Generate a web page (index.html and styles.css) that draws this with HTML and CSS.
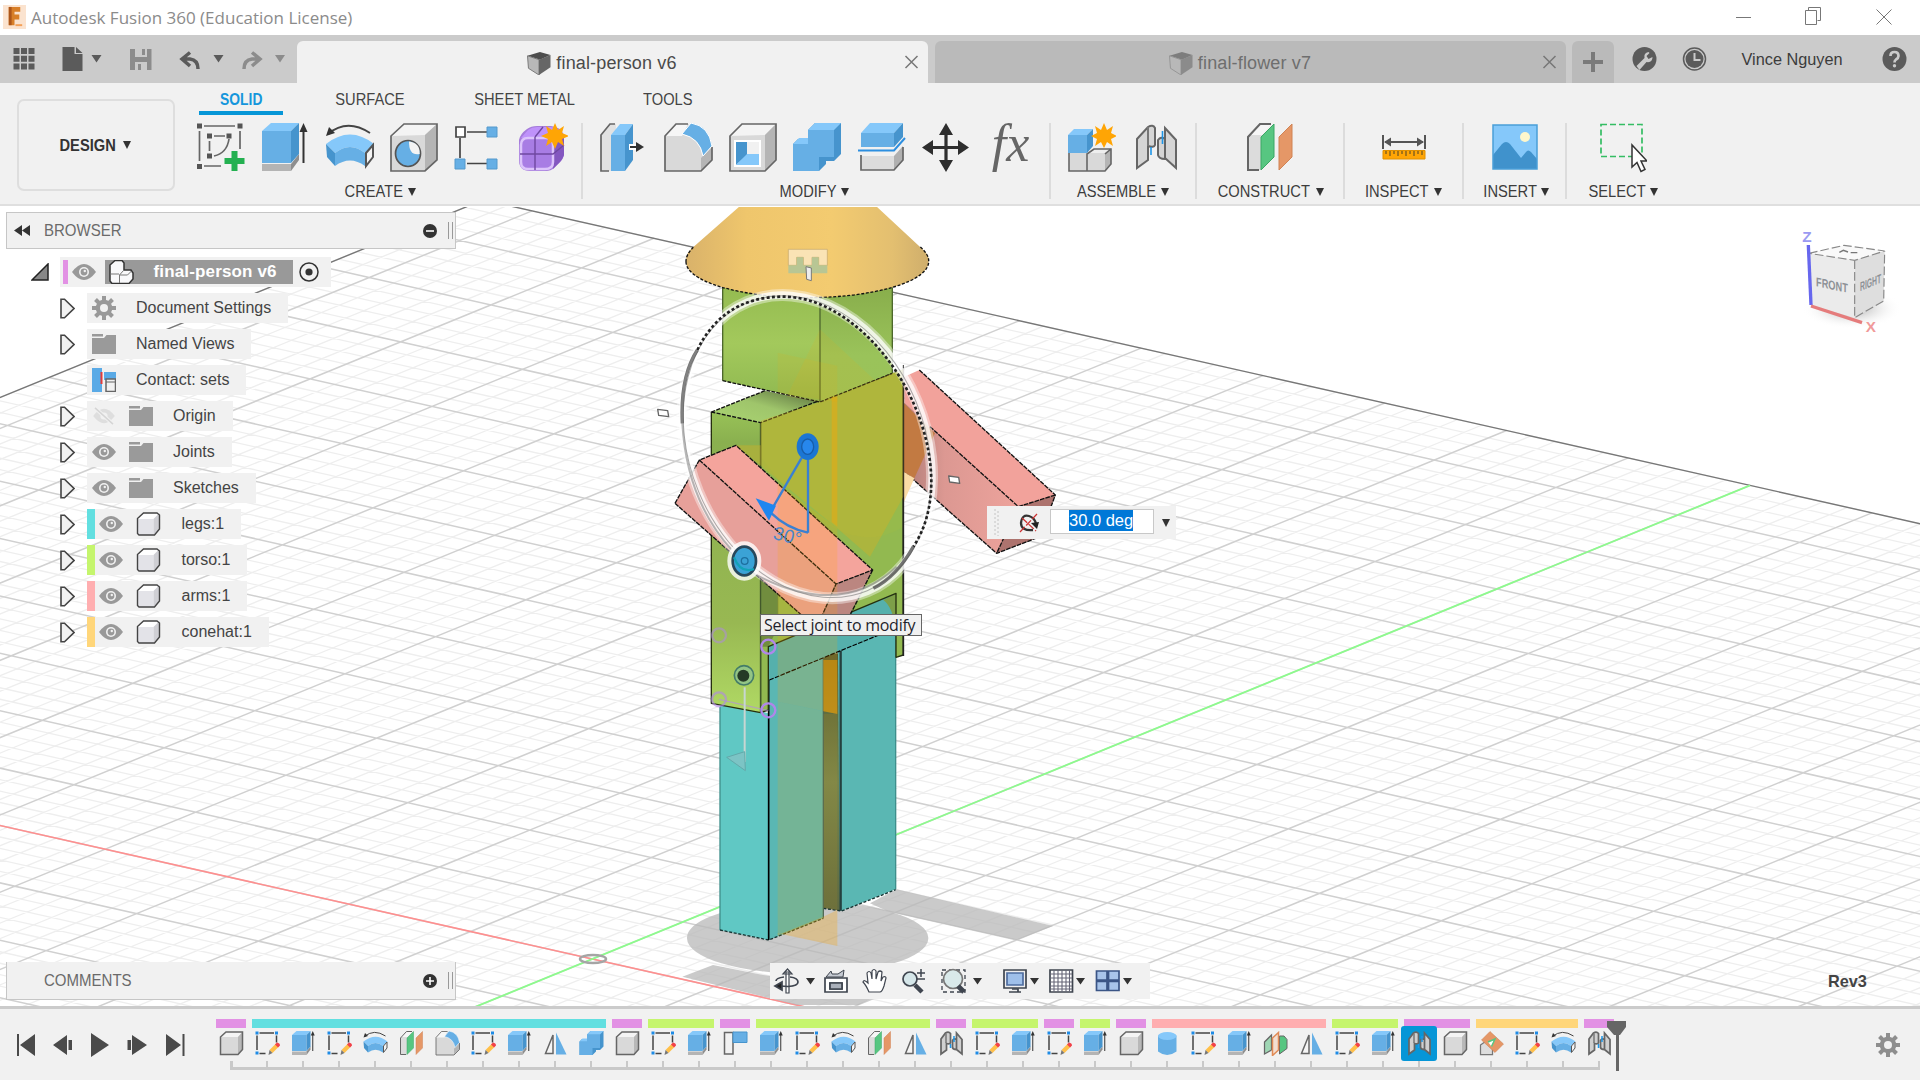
FILE: index.html
```html
<!DOCTYPE html>
<html lang="en">
<head>
<meta charset="utf-8">
<title>Autodesk Fusion 360 (Education License)</title>
<link rel="stylesheet" href="styles.css">
</head>
<body>
<svg class="sprite" aria-hidden="true">
  <symbol id="sketch-new" viewBox="0 0 50 50">
    <path d="M8 3h31M3.500 8v30M44 8v18M8 43h17M18 13h11M13.500 18v10M33 16q-2 14-15 17" fill="none" stroke="#666" stroke-width="1.700"/>
    <path d="M1 .5h5v5H1zM41.500 .5h5v5h-5zM1 41h5v5H1zM11 10.500h5v5h-5zM30.500 10.500h5v5h-5zM11 30.500h5v5h-5z" fill="#555"/>
    <path d="M35.500 28h6v7h7v6h-7v7h-6v-7h-7v-6h7z" fill="#23b050"/>
  </symbol>
  <symbol id="extrude" viewBox="0 0 50 50">
    <path d="M2 41h29v7H2z" fill="#b4b4b4"/><path d="M31 41l8-10v6l-8 11z" fill="#8e8e8e"/>
    <path d="M2 8h29v32H2z" fill="#66afe5"/><path d="M2 8l9-8h28l-8 8z" fill="#85c8fa"/><path d="M31 8l8-8v31l-8 9z" fill="#4694cd"/>
    <path d="M43.500 6v34" stroke="#333" stroke-width="2"/><path d="M43.500 0l4 9h-8z" fill="#333"/>
  </symbol>
  <symbol id="revolve" viewBox="0 0 50 50">
    <path d="M3 11Q22-5 45 10" fill="none" stroke="#444" stroke-width="2"/><path d="M1 13l3-9 6 6z" fill="#333"/>
    <path d="M1 21Q25 2 49 21l-9 9Q25 18 10 30z" fill="#85c8fa"/>
    <path d="M10 30Q25 18 40 30v13Q25 32 10 43z" fill="#66afe5"/><path d="M1 21l9 9v13l-8-9z" fill="#4694cd"/>
    <path d="M41 30l7-8v12l-7 9z" fill="#f4f4f4" stroke="#555" stroke-width="2"/>
  </symbol>
  <symbol id="hole" viewBox="0 0 50 50">
    <path d="M2 13L15 1h33v36L36 48H2z" fill="#d9d9d9"/><path d="M2 13L15 1h33L36 12z" fill="#f4f4f4"/><path d="M36 12L48 1v36L36 48z" fill="#b5b5b5"/>
    <path d="M2 13L15 1h33v36L36 48H2z" fill="none" stroke="#666" stroke-width="1.700"/>
    <ellipse cx="19" cy="30.500" rx="12.500" ry="13" fill="#66afe5" stroke="#555" stroke-width="1.700"/><path d="M20 18.500q11 1 10.700 12.500-11 2-10.700-12.500z" fill="#f4f4f4"/>
  </symbol>
  <symbol id="pattern" viewBox="0 0 50 50">
    <path d="M13 9h20M6 15v20M13 40.500h20" stroke="#444" stroke-width="1.700"/>
    <path d="M2 4h9v10H2z" fill="#fff" stroke="#444" stroke-width="1.700"/>
    <path d="M33 4h10v10H33zM1 36h10v10H1zM33 36h10v10H33z" fill="#66afe5" stroke="#5599cc"/>
  </symbol>
  <symbol id="form" viewBox="0 0 50 50">
    <path d="M1 17Q2 11 9 6q4-3 10-3h14q10 1 13 9v20q-1 5-6 9l-4 4q-3 3-8 3H12Q1 48 1 37z" fill="#a67ddb"/>
    <path d="M3 15l7-8q4-3 9-3h14q8 1 10 6l-8 5z" fill="#bf92fa"/>
    <path d="M36 17l10-6v21q-1 4-5 8l-6 6z" fill="#8457c0"/>
    <path d="M3 22q0-7 7-7h17q8 0 8 7v17q0 7-8 7H10q-7 0-7-7z" fill="#a87de4" stroke="#dcc4fb" stroke-width="2.500"/>
    <path d="M17 14v33M2 31h33l11-9M17 14l8-10" stroke="#6f48a0" stroke-width="1.400" fill="none"/>
    <path d="M37 0l3 7 6-4-2 7 7 3-7 3 2 7-6-4-3 7-3-7-6 4 2-7-7-3 7-3-2-7 6 4z" fill="#ffa505"/>
  </symbol>
  <symbol id="presspull" viewBox="0 0 50 50">
    <path d="M11 48H2V12L11 1h6v47z" fill="#e2e2e2"/><path d="M10 48H2V12L11 1h5" fill="none" stroke="#666" stroke-width="1.700"/>
    <path d="M12 12h14v36H12z" fill="#66afe5"/><path d="M12 12l9-11h13l-8 11z" fill="#85c8fa"/><path d="M26 12l8-11v36l-8 11z" fill="#4694cd"/>
    <path d="M30 24h8" stroke="#fff" stroke-width="6"/><path d="M31 24h8" stroke="#333" stroke-width="2"/><path d="M37 19l8 5-8 5z" fill="#333"/>
  </symbol>
  <symbol id="fillet" viewBox="0 0 50 50">
    <path d="M2 13L13 1h12q22 6 24 22v14L38 48H2z" fill="#d9d9d9"/><path d="M2 13L13 1h12l-6 12z" fill="#f6f6f6"/><path d="M38 35l11-11v13L38 48z" fill="#b5b5b5"/>
    <path d="M25 1H13L2 13v35h36l11-11V24" fill="none" stroke="#666" stroke-width="1.700"/>
    <path d="M19 11L28 0q18 3 21 23l-9 10q-3-18-21-22z" fill="#66afe5" stroke="#fff" stroke-width="1"/>
  </symbol>
  <symbol id="shell" viewBox="0 0 50 50">
    <path d="M2 13L14 1h34v36L37 48H2z" fill="#d9d9d9"/><path d="M2 13L14 1h34L37 12z" fill="#f4f4f4"/><path d="M37 12L48 1v36L37 48z" fill="#b5b5b5"/>
    <path d="M2 13L14 1h34v36L37 48H2z" fill="none" stroke="#666" stroke-width="1.700"/>
    <path d="M6 17h27v27H6z" fill="#fff"/><path d="M8 19h11v13L8 42z" fill="#4694cd"/><path d="M8 42l11-11h12v11z" fill="#85c8fa"/><path d="M19 19h12v12H19z" fill="#f1f1f1"/>
  </symbol>
  <symbol id="combine" viewBox="0 0 50 50">
    <path d="M1 21l5-5h10V7L23 0h26v31l-7 7H34v3l-7 7H1z" fill="#4694cd"/>
    <path d="M1 21h15V7h26v27H27v14H1z" fill="#66afe5"/><path d="M1 21l6-6h9v6zM16 7l7-7h26l-7 7z" fill="#85c8fa"/>
  </symbol>
  <symbol id="split" viewBox="0 0 50 50">
    <path d="M4 10h33v14H4z" fill="#66afe5"/><path d="M4 10l9-10h33l-9 10z" fill="#85c8fa"/><path d="M37 10l9-10v14l-9 10z" fill="#4694cd"/>
    <path d="M1 27.500h36L48 15" fill="none" stroke="#2d8fe0" stroke-width="2"/>
    <path d="M4 33h33v14H4z" fill="#dcdcdc"/><path d="M37 33l9-10v14l-9 10z" fill="#b0b0b0"/><path d="M4 32v15h33l9-10V24" fill="none" stroke="#666" stroke-width="1.700"/>
  </symbol>
  <symbol id="move" viewBox="0 0 50 50">
    <path d="M25 6v37M6 24.500h38" stroke="#2e2e2e" stroke-width="3.200"/><path d="M25 0l7 12H18zM25 49l7-12H18zM1 24.500L12 17v15zM48 24.500L37 17v15z" fill="#2e2e2e"/>
  </symbol>
  <symbol id="component" viewBox="0 0 50 50">
    <path d="M3 29h18v19H3zM21 31l6-6h17l-6 6z" fill="#eee"/><path d="M3 29h18v19H3zM21 30h18v18H21z" fill="#d9d9d9"/><path d="M39 30l6-5v16l-6 7z" fill="#b5b5b5"/>
    <path d="M3 29v19h36l6-7V26H28l-7 5v17M39 31l6-5" fill="none" stroke="#666" stroke-width="1.600"/>
    <path d="M2 12h19v18H2z" fill="#66afe5"/><path d="M2 12l6-6h19l-6 6z" fill="#85c8fa"/><path d="M21 12l6-6v17l-6 7z" fill="#4694cd"/>
    <path d="M38 0l3 7 6-4-2 7 6 3-6 3 2 7-6-4-3 6-3-6-6 4 2-7-6-3 6-3-2-7 6 4z" fill="#ffa505"/>
  </symbol>
  <symbol id="joint" viewBox="0 0 50 50">
    <path d="M6 16L17 4q5-3 7 1v17q-1 3-7 1v14L6 45z" fill="#d5d5d5" stroke="#666" stroke-width="2"/><path d="M17 4v19" stroke="#777" stroke-width="2"/>
    <path d="M27 17q3-4 7-1v20q-6 0-7-4zM34 5l11 12v28L34 35z" fill="#d5d5d5" stroke="#666" stroke-width="2"/>
    <path d="M31.500 8v13M20 24v8" stroke="#1e96e8" stroke-width="1.600"/>
  </symbol>
  <symbol id="joint-small" viewBox="0 0 50 50">
    <path d="M4 16L13 4q6-4 10 1v18q-1 4-8 2v13L4 46z" fill="#d0d0d0" stroke="#666" stroke-width="3.500"/><path d="M14 5v19" stroke="#777" stroke-width="3"/>
    <path d="M27 19q3-5 8-2v20q-7 0-8-4zM35 4l11 13v29L35 37z" fill="#d0d0d0" stroke="#666" stroke-width="3.500"/>
    <path d="M30 10v12M23 26v8" stroke="#1e96e8" stroke-width="3"/>
  </symbol>
  <symbol id="plane" viewBox="0 0 50 50">
    <path d="M3 12L15 1h12L17 12v35H3z" fill="#dcdcdc"/><path d="M3 12L15 1h12L17 12z" fill="#f6f6f6"/><path d="M14 47H3V14L15 1h11" fill="none" stroke="#666" stroke-width="2"/>
    <path d="M16 14L29 1v33L16 47z" fill="#57c681" stroke="#3ba765"/><path d="M34 14L47 1v33L34 47z" fill="#e59767" stroke="#d08355"/>
  </symbol>
  <symbol id="inspect" viewBox="0 0 50 50">
    <path d="M4 12v14M46 12v14M6 19h38" stroke="#555" stroke-width="2"/><path d="M5 19l7-4.500v9zM45 19l-7-4.500v9z" fill="#555"/>
    <path d="M4 27.500h42V36H4z" fill="#ffa505" stroke="#e09000"/><path d="M7 28v3M11 28v5M15 28v3M19 28v5M23 28v3M27 28v5M31 28v3M35 28v5M39 28v3M43 28v4" stroke="#775a20" stroke-width="1.300"/>
  </symbol>
  <symbol id="insert" viewBox="0 0 50 50">
    <path d="M3 2h44v44H3z" fill="#85c8fa"/><path d="M3 32l9-11q4-4 8 0l11 14 5-6q2-3 5 0l6 7v10H3z" fill="#4092cc"/><circle cx="35" cy="14" r="5" fill="#fff7cc"/><path d="M3 2h44v44H3z" fill="none" stroke="#4a9fd8" stroke-width="1.500"/>
  </symbol>
  <symbol id="select" viewBox="0 0 50 50">
    <path d="M4 1.500h41v32H4z" fill="none" stroke="#34bd63" stroke-width="1.700" stroke-dasharray="6 3"/>
    <path d="M35 22v22l5-4.500 4 9 4-2-4-8.500h6z" fill="#fff" stroke="#333" stroke-width="1.500"/>
  </symbol>
  <symbol id="box" viewBox="0 0 50 50">
    <path d="M3 12L14 2h33v35L38 47H3z" fill="#d9d9d9"/><path d="M3 12L14 2h33L38 12z" fill="#f4f4f4"/><path d="M38 12l9-10v35l-9 10z" fill="#b8b8b8"/><path d="M3 12L14 2h33v35L38 47H3z" fill="none" stroke="#666" stroke-width="3"/>
  </symbol>
  <symbol id="sketch" viewBox="0 0 50 50">
    <path d="M9 4h29M4 9v29M43 9v14M9 45h12" stroke="#444" stroke-width="3"/><path d="M1 1h6v6H1zM40 1h6v6h-6zM1 41h6v6H1z" fill="#1e8be6"/>
    <path d="M29 38l13-13 6 6-13 13z" fill="#ffc04a"/><path d="M40 27l4-4q6 1 6 6l-4 4z" fill="#f2414a"/><path d="M29 38l6 6-8 4z" fill="#777"/>
  </symbol>
  <symbol id="mirror" viewBox="0 0 50 50">
    <path d="M20 8v37H5z" fill="#f5f5f5" stroke="#666" stroke-width="3"/><path d="M26 3v44h21z" fill="#66afe5"/>
  </symbol>
  <symbol id="jorigin" viewBox="0 0 50 50">
    <path d="M3 3h17v43H3z" fill="#f1f1f1" stroke="#666" stroke-width="3"/><path d="M20 2h28v21H20z" fill="#66afe5" stroke="#4694cd" stroke-width="2"/>
  </symbol>
  <symbol id="cylinder" viewBox="0 0 50 50">
    <path d="M6 9v32q18 14 37 0V9z" fill="#66afe5"/><ellipse cx="24.500" cy="10" rx="18.500" ry="8" fill="#85c8fa"/>
  </symbol>
  <symbol id="midplane" viewBox="0 0 50 50">
    <path d="M3 22L17 8v30L3 46z" fill="#9fd6b4" stroke="#666" stroke-width="2.500"/><path d="M33 10h9l6 7v18L33 46z" fill="#57c681" stroke="#666" stroke-width="2"/><path d="M19 14L31 3v35L19 49z" fill="#f3dfd2" stroke="#e08a55" stroke-width="3"/>
  </symbol>
  <symbol id="tangent" viewBox="0 0 50 50">
    <path d="M3 28l10-7 14 10v16H3z" fill="#ddd" stroke="#777" stroke-width="2.500"/><path d="M5 18L22 1l27 25-17 17z" fill="#e59767" stroke="#c87a48"/><path d="M18 22l14-6-7 15" fill="#fff" stroke="#57c681" stroke-width="3"/>
  </symbol>
  <symbol id="gear" viewBox="0 0 24 24">
    <path d="M12 0v24M0 12h24M3.500 3.500l17 17M20.500 3.500l-17 17" stroke="currentColor" stroke-width="4"/>
    <circle cx="12" cy="12" r="8.300" fill="currentColor"/><circle cx="12" cy="12" r="4" class="gear-hole"/>
  </symbol>
  <symbol id="eye" viewBox="0 0 24 18">
    <path d="M0 9Q12-7 24 9 12 25 0 9z" fill="#999"/><circle cx="12" cy="9" r="5" fill="#f1f1f1"/><circle cx="12" cy="9" r="3.400" fill="#999"/><circle cx="12.800" cy="8" r="1.200" fill="#f1f1f1"/>
  </symbol>
  <symbol id="eye-off" viewBox="0 0 24 20">
    <path d="M0 10Q12-6 24 10 12 26 0 10z" fill="#dedede"/><circle cx="12" cy="10" r="4" fill="#f1f1f1"/><path d="M2 1l20 18" stroke="#f1f1f1" stroke-width="4"/><path d="M2 1l20 18" stroke="#d5d5d5" stroke-width="1.600"/>
  </symbol>
  <symbol id="folder" viewBox="0 0 24 20"><path d="M0 0h11v2.500H0zM0 4h12l2.500-3H24v19H0z" fill="#9a9a9a"/></symbol>
  <symbol id="body" viewBox="0 0 24 24">
    <path d="M1 6l6-5h16v16l-5 6H1z" fill="#fff"/><path d="M1 7h16v16H1z" fill="#e3e3e8"/><path d="M17 7l6-6v16l-6 6z" fill="#cfcfd4"/><path d="M1 6.500L7 1h13.500L23 3v14l-5 6H2.500L1 21.500z" fill="none" stroke="#444" stroke-width="1.400"/>
  </symbol>
  <symbol id="arrow" viewBox="0 0 15 21"><path d="M1 1.200h3.500L14 10.500 4.500 19.800H1z" fill="#f1f1f1" stroke="#444" stroke-width="1.600"/></symbol>
  <symbol id="cube" viewBox="0 0 24 24"><path d="M0 4L13 0l11 3-11 5z" fill="#4d4d4d"/><path d="M0 4l12 4v16L1 17z" fill="#b8b8b8" stroke="#777"/><path d="M12 8l12-5v13l-12 8z" fill="#666"/></symbol>
</svg>

<header class="titlebar">
  <svg class="logo" viewBox="0 0 24 25"><path d="M0 0h24v25H0z" fill="#fbe3cf"/><path d="M6 2h12v5h-6v3h5v5h-5v6H6z" fill="#d87f28"/><path d="M6 2h3v19H6z" fill="#ad561a"/><path d="M13 20h7v2h-7z" fill="#f3a058"/></svg>
  <h1 class="title">Autodesk Fusion 360 (Education License)</h1>
  <svg class="winbtns" viewBox="0 0 160 20" fill="none" stroke="#777"><path d="M0 10.500h15M69.500 3.500h11v14h-11zM72.500 3v-2.500h12v13h-3M140.500 2.500l15 15M155.500 2.500l-15 15"/></svg>
</header>

<nav class="tabbar">
  <div class="quick">
    <svg viewBox="0 0 297 48" fill="#5b5b5b">
      <path d="M13.500 13h6v6h-6zM21 13h6v6h-6zM28.500 13h6v6h-6zM13.500 20.800h6v6h-6zM21 20.800h6v6h-6zM28.500 20.800h6v6h-6zM13.500 28.600h6v6h-6zM21 28.600h6v6h-6zM28.500 28.600h6v6h-6z"/>
      <path d="M62.500 12h12v7h8v17h-20zM76 12l6.500 6H76zM91.500 20h10l-5 7.500z"/>
      <g fill="#8c8c8c"><path d="M130 14h21.500v21H130z"/><path d="M135 14h12v8h-12zM135 27h12v8h-12z" fill="#cbcbcb"/><path d="M142 14h3v6h-3zM138 29h3v6h-3z"/></g>
      <path d="M190 17.500L182 24l8 7M183 24h7q8 1 8 10" fill="none" stroke="#5b5b5b" stroke-width="3.500"/><path d="M213.500 20h10l-5 7.500z"/>
      <path d="M252 17.500l8 6.500-8 7M259 24h-7q-8 1-8 10" fill="none" stroke="#8c8c8c" stroke-width="3.500"/><path d="M275 20h10l-5 7.500z" fill="#8c8c8c"/>
    </svg>
  </div>
  <div class="tab tab-on"><svg class="cube"><use href="#cube"/></svg><span>final-person v6</span><svg class="x" viewBox="0 0 12 12"><path d="M0 0l12 12M12 0L0 12"/></svg></div>
  <div class="tab"><svg class="cube"><use href="#cube"/></svg><span>final-flower v7</span><svg class="x" viewBox="0 0 12 12"><path d="M0 0l12 12M12 0L0 12"/></svg></div>
  <div class="plus"><svg viewBox="0 0 20 20"><path d="M10 0v20M0 10h20"/></svg></div>
  <div class="account">
    <svg class="round" viewBox="0 0 24 24"><circle cx="12" cy="12" r="12" fill="#5b5b5b"/><path d="M4 19l8-8q-1-5 4-6l1 1-3 3 2 3 4-2q0 6-6 5l-7 8z" fill="#cbcbcb"/></svg>
    <svg class="round" viewBox="0 0 24 24"><circle cx="12" cy="12" r="11" fill="#cbcbcb" stroke="#5b5b5b" stroke-width="1.500"/><circle cx="12" cy="12" r="9" fill="#5b5b5b"/><path d="M12 6v7h6" stroke="#cbcbcb" stroke-width="2" fill="none"/></svg>
    <span class="user">Vince Nguyen</span>
    <svg class="round" viewBox="0 0 24 24"><circle cx="12" cy="12" r="12" fill="#5b5b5b"/><path d="M8 9q0-4 4-4t4 4q0 2-2.500 3.500-1.500 1-1.500 3" fill="none" stroke="#cbcbcb" stroke-width="2.700"/><circle cx="12" cy="18.800" r="1.700" fill="#cbcbcb"/></svg>
  </div>
</nav>

<section class="toolbar">
  <div class="design"><button class="design-btn"><span class="cond">DESIGN</span><i class="caret"></i></button></div>
  <div class="ribbon">
    <div class="modes">
      <span class="mode mode-on"><b class="cond">SOLID</b></span><span class="mode"><b class="cond">SURFACE</b></span><span class="mode"><b class="cond">SHEET METAL</b></span><span class="mode"><b class="cond">TOOLS</b></span>
    </div>
    <div class="groups">
      <div class="group g-create"><div class="icons"><svg><use href="#sketch-new"/></svg><svg><use href="#extrude"/></svg><svg><use href="#revolve"/></svg><svg><use href="#hole"/></svg><svg><use href="#pattern"/></svg><svg><use href="#form"/></svg></div><div class="label"><span class="cond">CREATE</span><i class="caret"></i></div></div>
      <div class="group g-modify"><div class="icons"><svg><use href="#presspull"/></svg><svg><use href="#fillet"/></svg><svg><use href="#shell"/></svg><svg><use href="#combine"/></svg><svg><use href="#split"/></svg><svg><use href="#move"/></svg><span class="fx">fx</span></div><div class="label"><span class="cond">MODIFY</span><i class="caret"></i></div></div>
      <div class="group g-assemble"><div class="icons"><svg><use href="#component"/></svg><svg><use href="#joint"/></svg></div><div class="label"><span class="cond">ASSEMBLE</span><i class="caret"></i></div></div>
      <div class="group g-construct"><div class="icons"><svg><use href="#plane"/></svg></div><div class="label"><span class="cond">CONSTRUCT</span><i class="caret"></i></div></div>
      <div class="group g-inspect"><div class="icons"><svg><use href="#inspect"/></svg></div><div class="label"><span class="cond">INSPECT</span><i class="caret"></i></div></div>
      <div class="group g-insert"><div class="icons"><svg><use href="#insert"/></svg></div><div class="label"><span class="cond">INSERT</span><i class="caret"></i></div></div>
      <div class="group g-select"><div class="icons"><svg><use href="#select"/></svg></div><div class="label"><span class="cond">SELECT</span><i class="caret"></i></div></div>
    </div>
  </div>
</section>

<main class="viewport">
  <svg class="scene" viewBox="0 207 1920 799">
    <defs>
      <linearGradient id="hat" x1="0" x2="1"><stop offset="0" stop-color="#d9b26a"/><stop offset=".25" stop-color="#efc66c"/><stop offset=".6" stop-color="#f3cb70"/><stop offset=".85" stop-color="#e3bf70"/><stop offset="1" stop-color="#cfae6c"/></linearGradient>
      <linearGradient id="headL" x1="0" y1="0" x2="0" y2="1"><stop offset="0" stop-color="#94bb50"/><stop offset=".5" stop-color="#a3c95c"/><stop offset="1" stop-color="#8fb850"/></linearGradient>
      <linearGradient id="headR" x1="0" y1="0" x2="0" y2="1"><stop offset="0" stop-color="#88ad4b"/><stop offset=".6" stop-color="#9ac35a"/><stop offset="1" stop-color="#9ac259"/></linearGradient>
      <linearGradient id="torsoL" x1="0" y1="0" x2="0" y2="1"><stop offset="0" stop-color="#98c257"/><stop offset=".1" stop-color="#8ab04f"/><stop offset=".7" stop-color="#98b852"/><stop offset="1" stop-color="#b0d964"/></linearGradient>
      <linearGradient id="torsoTop" x1="0" y1="1" x2="1" y2="0"><stop offset="0" stop-color="#abd572"/><stop offset=".5" stop-color="#9fc56b"/><stop offset="1" stop-color="#54683a"/></linearGradient>
      <linearGradient id="armR" x1="0" x2="1"><stop offset="0" stop-color="#b07d79"/><stop offset=".35" stop-color="#dc9892"/><stop offset="1" stop-color="#eda39c"/></linearGradient>
      <linearGradient id="gap" x1="0" y1="0" x2="0" y2="1"><stop offset="0" stop-color="#4f5a33"/><stop offset=".5" stop-color="#75854e"/><stop offset="1" stop-color="#5d6a42"/></linearGradient>
      <radialGradient id="cubeShadow"><stop offset="0" stop-color="#999" stop-opacity=".9"/><stop offset="1" stop-color="#fff" stop-opacity="0"/></radialGradient>
    </defs>
    <g id="grid" fill="none"></g>
    <g transform="translate(640 200) scale(.33333)" stroke-linejoin="round">
      <g fill="#b8b8b8" fill-opacity=".75">
        <path d="M141 2215A362 107 0 0 1 740 2132L690 2110 770 2068 1240 2178 1130 2220 755 2137A362 107 0 0 1 865 2215A362 107 0 0 1 141 2215z"/>
        <path d="M127 2330L219 2295 369 2325 736 2375 655 2415 471 2415z"/>
      </g>
      <g>
        <!-- legs -->
        <path d="M550 1360h52v772l-52-8z" fill="url(#gap)"/>
        <path d="M592 1100l175-70v1038l-162 64h-5z" fill="#5ab7b3"/>
        <path d="M240 1500l145 40v680l-145-30z" fill="#60c8c4"/>
        <path d="M385 1340h165v815l-163 65z" fill="#5ab7b3"/>
        <path d="M385 1330L730 1180 765 1240V1287L385 1440z" fill="#55b0ac"/>
        <path d="M240 1520v670M767 1230v838" fill="none" stroke="#3f8f8c" stroke-width="4"/>
        <path d="M240 2190l146 30 164-65M550 2125l55 8 162-64" fill="none" stroke="#163433" stroke-width="4" stroke-dasharray="9 5"/>
        <path d="M386 1440v780" stroke="#000" stroke-width="5"/><path d="M602 1352v780" stroke="#25403f" stroke-width="7"/><path d="M550 1375v780" stroke="#47685b" stroke-width="4"/>
        <path d="M388 1440L765 1285" stroke="#000" stroke-width="3.500" stroke-dasharray="14 4"/>
        <!-- torso -->
        <path d="M214 636L375 572 540 606 362 668z" fill="url(#torsoTop)"/>
        <path d="M214 636l148 32v870L214 1510z" fill="url(#torsoL)"/>
        <path d="M362 668L790 508V1365L768 1372V1180L385 1340V1530L362 1538z" fill="#92b950"/>
        <path d="M768 1180v110q-10-70-38-90z" fill="#7d9f48"/>
        <path d="M362 668L540 606 757 520 790 508V980Q600 1100 362 770z" fill="#96ba4c"/>
        <path d="M365 1100h50v180l-30 60h-20z" fill="#718d3e"/>
        <path d="M214 636v874l148 28 23-8V1340L768 1180v192l22-7V508" fill="none" stroke="#26300f" stroke-width="4"/>
        <path d="M362 668v870" stroke="#42582a" stroke-width="5"/>
        <path d="M214 636L375 572M214 636l148 32L757 520" fill="none" stroke="#111" stroke-width="4" stroke-dasharray="12 4"/>
        <!-- head -->
        <path d="M248 255l292 37v314L248 542z" fill="url(#headL)"/><path d="M540 292l217-37v265l-217 86z" fill="url(#headR)"/>
        <path d="M248 262v280M540 292v314M757 262v258" stroke="#4d682d" stroke-width="4"/><path d="M248 542l292 64 217-86" fill="none" stroke="#111" stroke-width="4" stroke-dasharray="11 4"/>
        <!-- hat -->
        <path d="M300 18L150 150Q137 165 138 185A364 108 0 0 0 866 185Q868 165 850 150L708 18z" fill="url(#hat)"/>
        <path d="M138 185A364 108 0 0 0 866 185Q868 165 840 140M138 185Q137 165 160 142" fill="none" stroke="#111" stroke-width="4" stroke-dasharray="9 5"/>
        <!-- right arm -->
        <path d="M793 530L838 510 1246 885 1135 925 793 612z" fill="#f2a29b"/><path d="M793 608L870 680 1135 920 1070 1060 793 815z" fill="url(#armR)"/><path d="M1135 920L1246 885 1200 1010 1070 1060z" fill="#ad736e"/>
        <path d="M838 510L1246 885 1200 1010 1070 1060 793 815M870 680l265 240-65 140M1135 920l111-35" fill="none" stroke="#111" stroke-width="4" stroke-dasharray="14 3"/>
        <path d="M790 608l95 92-62 135-33-20z" fill="#c27a42"/><path d="M790 815l33 20-33 75z" fill="#fbdca6"/>
        <path d="M790 508v860" stroke="#222" stroke-width="5"/>
        <!-- left arm -->
        <path d="M178 780L588 1152 545 1250H490L105 910z" fill="#e7a09a"/><path d="M178 780L288 736 698 1110 588 1152z" fill="#f4a49c"/><path d="M588 1152L698 1110 625 1250H545z" fill="#bb8680"/>
        <path d="M105 910L178 780 288 736 698 1110 588 1152 545 1250M178 780L588 1152M105 910L490 1250M698 1110l-70 140" fill="none" stroke="#111" stroke-width="4" stroke-dasharray="14 3"/>
        <!-- construction planes -->
        <path d="M362 662L540 606 757 520 790 508V890L690 1070 592 985 288 736H362z" fill="#d8b022" fill-opacity=".38"/>
        <g fill="#ffa500">
          <path d="M540 388L704 540 540 606 440 590z" fill-opacity=".1"/>
          <path d="M413 458L592 497V606L413 580z" fill-opacity=".1"/>
          <path d="M413 850L592 985V1542L413 1505z" fill-opacity=".19"/>
          <path d="M413 1505L550 1534V2155L413 2210z" fill-opacity=".16"/>
          <path d="M550 1380h42v162l-42-8z" fill-opacity=".5"/><path d="M550 1542h42v590l-42-8z" fill-opacity=".1"/>
          <path d="M413 2205L550 2150 592 2130V2238L413 2200z" fill-opacity=".28"/>
          <path d="M575 590h17v390l-17-14z" fill-opacity=".4"/>
        </g>
      </g>
      <!-- rotation ring -->
      <g transform="translate(502 740) rotate(67.400)" fill="none">
        <ellipse rx="470" ry="355" stroke="#fff" stroke-opacity=".4" stroke-width="36"/><ellipse rx="470" ry="355" stroke="#fff" stroke-opacity=".75" stroke-width="22"/>
        <ellipse rx="468" ry="353" stroke="#777" stroke-opacity=".6" stroke-width="3"/>
      </g>
      <path d="M172 450Q250 290 430 290C640 290 868 560 874 840Q874 960 820 1040" fill="none" stroke="#222" stroke-width="8" stroke-dasharray="9 7"/>
      <path d="M172 450Q120 530 127 670M820 1040Q770 1130 700 1165" fill="none" stroke="#555" stroke-width="10" stroke-opacity=".8"/>
      <path d="M172 450Q120 530 127 670Q140 900 275 1050M340 1120Q600 1260 770 1100" fill="none" stroke="#888" stroke-width="6" stroke-opacity=".6"/>
      <path d="M487 770L400 920M504 778V998M392 938Q440 985 504 998" fill="none" stroke="#3a80d2" stroke-width="7"/>
      <path d="M347 895L408 917 387 962z" fill="#1e86f0"/><ellipse cx="503" cy="740" rx="33" ry="40" fill="#1b76d4"/><ellipse cx="503" cy="740" rx="18" ry="23" fill="#2787ec" stroke="#185da8" stroke-width="4"/>
      <text x="397" y="1016" class="angle" transform="rotate(14 397 1016)">30°</text>
      <ellipse cx="313" cy="1083" rx="43" ry="51" fill="none" stroke="#fff" stroke-width="16" stroke-opacity=".8"/>
      <ellipse cx="313" cy="1083" rx="35" ry="43" fill="#3ba2d6" stroke="#28485c" stroke-width="8"/><circle cx="314" cy="1083" r="10" fill="none" stroke="#1d6f9f" stroke-width="4"/><path d="M282 1072q20 50 60 35" fill="none" stroke="#13a2b8" stroke-width="7"/>
      <!-- joint glyphs -->
      <path d="M445 148h117v48h-26v-24h-20v24h-26v-24h-20v24h-25z" fill="#fae3b5" stroke="#c2a66a" stroke-width="2"/><path d="M445 196h25v-24h20v24h26v-24h20v24h26v24H445z" fill="#b8c694"/><path d="M498 200l16 4v38l-14-4z" fill="#eee" stroke="#777" stroke-width="3"/>
      <path d="M53 628l30 4 3 18-30-4zM926 828l30 4 3 18-30-4z" fill="#fff" stroke="#666" stroke-width="4"/><path d="M790 495v10" stroke="#333" stroke-width="3"/>
      <path d="M237 1498l148 34" stroke="#b58ae8" stroke-width="4" opacity=".6"/>
      <g fill="none" stroke="#b086ea" stroke-width="7"><circle cx="237" cy="1306" r="21" opacity=".5"/><circle cx="385" cy="1340" r="21"/><circle cx="237" cy="1498" r="21" opacity=".6"/><circle cx="385" cy="1531" r="21"/></g>
      <circle cx="312" cy="1426" r="29" fill="#93c585" stroke="#447c68" stroke-width="5"/><circle cx="310" cy="1427" r="18" fill="#253a26"/>
      <path d="M314 1462v224" stroke="#c7d6d2" stroke-width="6"/><path d="M260 1672l54-17 2 57z" fill="#7cc4c5" stroke="#62a9aa" stroke-width="3"/>
    </g>
    <!-- view cube -->
    <g transform="translate(1720 205) scale(.33333)">
      <ellipse cx="395" cy="310" rx="150" ry="62" fill="url(#cubeShadow)"/>
      <path d="M267 145l105-24 122 17-90 28z" fill="#f9f9f9"/><path d="M267 145l137 21v172l-130-36z" fill="#ebebeb"/><path d="M404 166l90-28-3 150-87 50z" fill="#dedede"/>
      <path d="M267 145l105-24 122 17-90 28zM404 166v172l87-50 3-150" fill="none" stroke="#888" stroke-width="3.500" stroke-dasharray="26 9"/>
      <path d="M358 142l12-6 14 5M392 143h20" fill="none" stroke="#777" stroke-width="4"/>
      <path d="M265 120l8 180" stroke="#6767ee" stroke-width="10"/><path d="M273 303l153 50" stroke="#e57c7c" stroke-width="10"/>
      <text x="247" y="110" class="axis axis-z">Z</text><text x="437" y="381" class="axis axis-x">X</text>
      <text class="face" transform="matrix(.84 .18 0 1.150 288 243)">FRONT</text><text class="face" transform="matrix(.62 -.26 0 1.150 420 259)">RIGHT</text>
    </g>
  </svg>

  <section class="browser">
    <header class="panel"><svg class="rew" viewBox="0 0 16 11"><path d="M8 0v11L0 5.500zM16 0v11L8 5.500z"/></svg><span class="cond">BROWSER</span><svg class="knob" viewBox="0 0 14 14"><circle cx="7" cy="7" r="7"/><path d="M3 7h8" stroke="#fff" stroke-width="1.600"/></svg><i class="grip"></i></header>
    <div class="row root">
      <svg class="open" viewBox="0 0 18 18"><path d="M1 17L17 1v16z" fill="#888" stroke="#222" stroke-width="1.500"/></svg>
      <div class="cell"><i class="stripe s-root"></i><svg class="eye"><use href="#eye"/></svg>
        <span class="picked"><svg class="asm" viewBox="0 0 25 24"><path d="M1 5l5-4.500h7L15 3v7h7l2 3v6l-4 4.500H3L1 21z" fill="#f8f8fa" stroke="#333" stroke-width="1.500"/><path d="M1.500 14H10M10.500 23v-8l4-4.500M10.500 15h8l4-4" stroke="#777" fill="none"/></svg>final-person v6</span>
        <svg class="target" viewBox="0 0 20 20"><circle cx="10" cy="10" r="9" fill="none" stroke="#333" stroke-width="1.500"/><circle cx="10" cy="10" r="3.600" fill="#333"/></svg></div>
    </div>
    <div class="row"><svg class="arrow"><use href="#arrow"/></svg><div class="cell"><svg class="gear"><use href="#gear"/></svg><span class="t1">Document Settings</span></div></div>
    <div class="row"><svg class="arrow"><use href="#arrow"/></svg><div class="cell"><svg class="folder"><use href="#folder"/></svg><span class="t1">Named Views</span></div></div>
    <div class="row"><svg class="arrow"></svg><div class="cell"><svg class="contact" viewBox="0 0 24 24"><path d="M0 0h10v24H0zM12 4h12v8H12z" fill="#5aaae6"/><path d="M9.500 4v12" stroke="#e23b3b" stroke-width="2"/><path d="M14 11h9.500v12.500H14z" fill="#f1f1f1" stroke="#666" stroke-width="1.500"/><path d="M14 14h9" stroke="#666"/></svg><span class="t1">Contact: sets</span></div></div>
    <div class="row"><svg class="arrow"><use href="#arrow"/></svg><div class="cell"><svg class="eye"><use href="#eye-off"/></svg><svg class="folder f2"><use href="#folder"/></svg><span class="t1">Origin</span></div></div>
    <div class="row"><svg class="arrow"><use href="#arrow"/></svg><div class="cell"><svg class="eye"><use href="#eye"/></svg><svg class="folder f2"><use href="#folder"/></svg><span class="t1">Joints</span></div></div>
    <div class="row"><svg class="arrow"><use href="#arrow"/></svg><div class="cell"><svg class="eye"><use href="#eye"/></svg><svg class="folder f2"><use href="#folder"/></svg><span class="t1">Sketches</span></div></div>
    <div class="row part"><svg class="arrow"><use href="#arrow"/></svg><div class="cell"><i class="stripe cyan"></i><svg class="eye"><use href="#eye"/></svg><svg class="bodyi"><use href="#body"/></svg><span class="t1">legs:1</span></div></div>
    <div class="row part"><svg class="arrow"><use href="#arrow"/></svg><div class="cell"><i class="stripe green"></i><svg class="eye"><use href="#eye"/></svg><svg class="bodyi"><use href="#body"/></svg><span class="t1">torso:1</span></div></div>
    <div class="row part"><svg class="arrow"><use href="#arrow"/></svg><div class="cell"><i class="stripe pink"></i><svg class="eye"><use href="#eye"/></svg><svg class="bodyi"><use href="#body"/></svg><span class="t1">arms:1</span></div></div>
    <div class="row part"><svg class="arrow"><use href="#arrow"/></svg><div class="cell"><i class="stripe yellow"></i><svg class="eye"><use href="#eye"/></svg><svg class="bodyi"><use href="#body"/></svg><span class="t1">conehat:1</span></div></div>
  </section>

  <div class="tooltip">Select joint to modify</div>
  <div class="mini">
    <svg class="dots" viewBox="0 0 5 27"><path d="M1 0v27M4 2v25" stroke="#ccc" stroke-width="1.200" stroke-dasharray="2 2"/></svg>
    <svg class="rot" viewBox="0 0 20 20"><path d="M14 17Q2 18 2 10 3 1 10 3q6 2 7 8" fill="none" stroke="#333" stroke-width="2.300"/><path d="M12 10l8-1-2 7z" fill="#222"/><path d="M1 19L18 1M3 5l14 13" stroke="#c33" stroke-width="1.300" stroke-dasharray="7 2"/></svg>
    <div class="field"><span>30.0 deg</span></div><i class="caret"></i>
  </div>

  <div class="comments panel"><span class="cond">COMMENTS</span><svg class="knob" viewBox="0 0 14 14"><circle cx="7" cy="7" r="7"/><path d="M3 7h8M7 3v8" stroke="#fff" stroke-width="1.600"/></svg><i class="grip"></i></div>

  <div class="navbar">
    <svg viewBox="0 0 380 36" fill="none" stroke="#3f454f" stroke-width="1.700">
      <path d="M16 30V9h3v21zM13 11l4.500-5L22 11z" fill="#fff" stroke-width="1.200"/><path d="M20 14q8 1 8 5 0 4-10 4.500l-8-.5M14 14q-8 1-8 4"/><path d="M5 23l7-4v8z" fill="#222"/>
      <path d="M55 15h22v14H55zM60 20h12v6H60z" fill="#fff"/><path d="M60 20h12v6H60z" fill="#aab0ba"/><path d="M56 14l5-6 1 3h6l6-4-1 7z" fill="#c5cad2" stroke-width="1"/>
      <path d="M99 29q-3-7-6-10 1-3 5 1l-1-10q2-3 4 0l1 6 0-8q2-3 4 0l0 8 2-7q2-2 4 0l-1 9 2-4q3-1 3 1l-2 8q-2 6-4 6z" fill="#fff" stroke-width="1.200"/>
      <circle cx="140" cy="16" r="7" fill="#d5e6e9"/><path d="M145 22l7 7" stroke-width="4.500"/><path d="M147 10h8M151 6v8M147 16h8" stroke-width="1.500"/>
      <path d="M172 7h23v22h-23z" stroke-dasharray="4 3" stroke-width="1.300"/><circle cx="183" cy="16" r="9.500" fill="#d9e9ea" stroke="#777"/><path d="M188 23l6 6" stroke-width="5"/>
      <path d="M234 7h22v18h-22z" fill="#eee"/><path d="M237 10h16v12h-16z" fill="#9fc0ea" stroke="#4f6da0"/><path d="M242 26h6v3h3M239 29h12" />
      <path d="M280 7h22.500v22H280z" fill="#fff"/><path d="M284 7v22M288 7v22M292 7v22M296 7v22M299.500 7v22M280 11h22M280 15h22M280 19h22M280 23h22M280 26h22" stroke="#667" stroke-width="1.100"/>
      <path d="M326.500 8h10.500v9h-10.500zM338.500 8h10.500v9h-10.500zM326.500 18.500h10.500v9h-10.500zM338.500 18.500h10.500v9h-10.500z" fill="#a8c4ea" stroke="#3b5586"/>
      <path d="M36 15h9l-4.500 6.500zM203 15h9l-4.500 6.500zM260 15h9l-4.500 6.500zM306 15h9l-4.500 6.500zM353 15h9l-4.500 6.500z" fill="#333" stroke="none"/>
    </svg>
  </div>
  <div class="rev">Rev3</div>
</main>

<footer class="timeline">
  <svg class="play" viewBox="0 0 190 24" fill="#4a4a4a"><path d="M17 1h2v22h-2zM35 1v22L20 12zM67 2v20L53 12zM68.500 7h3.500v10h-3.500zM91 0l18 12-18 12zM127.500 7h3.500v10h-3.500zM132 2v20l15-10zM166 1v22l15-11zM182.500 1h2v22h-2z"/></svg>
  <div class="track" id="track"></div>
  <svg class="marker" viewBox="0 0 20 50"><path d="M0 0h19v6l-6 8h-1v36h-3V14H7L0 6z" fill="#666"/></svg>
  <svg class="gear cog"><use href="#gear"/></svg>
</footer>
<script src="app.js"></script>
</body>
</html>
```
FILE: styles.css
```css
* { box-sizing: border-box; }
html, body { margin: 0; height: 100%; }
body { width: 1920px; height: 1080px; overflow: hidden; display: flex; flex-direction: column; font-family: "Liberation Sans", Arial, sans-serif; font-size: 16px; color: #3c3c3c; background: #fff; }
svg { display: block; flex: none; }
.sprite { position: absolute; width: 0; height: 0; }
.gear-hole { fill: #f1f1f1; }
.cond { display: inline-block; transform: scaleX(.89); font-size: 16.5px; font-weight: 400; white-space: nowrap; }
.caret { display: inline-block; border: 4.500px solid transparent; border-top: 8px solid #333; border-bottom: 0; }

.titlebar { height: 35px; display: flex; align-items: center; padding-left: 3px; background: #fff; }
.logo { width: 23px; height: 24px; margin-top: -2px; }
.title { margin: 0 0 0 5px; flex: 1; font: 400 17px "Open Sans", "Noto Sans", sans-serif; color: #8b8b8b; white-space: nowrap; }
.winbtns { width: 160px; height: 20px; margin: -2px 24px 0 0; }

.tabbar { height: 48px; display: flex; align-items: flex-end; background: #cbcbcb; }
.quick { width: 297px; height: 48px; }
.quick svg { width: 297px; height: 48px; }
.tab { width: 631px; height: 42px; padding: 2px 21px 0 0; margin-right: 7px; border-radius: 6px 6px 0 0; background: #bababa; display: grid; grid-template-columns: 24px auto; gap: 5px; justify-content: center; align-items: center; position: relative; font-size: 18px; letter-spacing: .15px; color: #6e6e6e; }
.tab-on { background: #f1f1f1; color: #4a4a4a; }
.tab-on + .tab { margin-right: 6px; }
.cube { width: 24px; height: 23px; }
.tab:not(.tab-on) .cube { opacity: .55; }
.x { position: absolute; right: 10px; top: 15px; width: 13px; height: 12px; stroke: #777; stroke-width: 1.500; overflow: visible; }
.plus { width: 42px; height: 42px; border-radius: 6px 6px 0 0; background: #bababa; display: grid; place-items: center; }
.plus svg { width: 20px; height: 20px; stroke: #7a7a7a; stroke-width: 4; }
.account { flex: 1; height: 48px; display: flex; align-items: center; padding-left: 17.500px; }
.round { width: 25px; height: 24px; margin-right: 25px; }
.user { margin: 0 39px 0 10px; font-size: 16.300px; }
.account .round:last-child { margin: 0; }

.toolbar { height: 123px; display: flex; background: #f1f1f1; border-bottom: 2px solid #dfdfdf; }
.design { width: 191px; padding: 16px 0 0 17px; }
.design-btn { width: 158px; height: 92px; border: 2px solid #dedede; border-radius: 7px; background: none; font: bold 16px "Liberation Sans", sans-serif; color: #333; display: flex; align-items: center; justify-content: center; gap: 4px; padding: 0 5px 0 0; }
.design-btn .cond { font-weight: 700; }
.modes { height: 40px; display: flex; padding-left: 8px; }
.mode { height: 32px; display: flex; align-items: flex-end; justify-content: center; padding: 0 0 6px; color: #444; margin-right: 44px; }
.mode-on { width: 84px; margin-right: 43px; color: #1596dc; border-bottom: 4px solid #0696d7; padding-bottom: 2px; }
.mode-on .cond { font-weight: 700; transform: scaleX(.84); }
.mode:nth-child(2) { width: 88px; }
.mode:nth-child(3) { width: 120px; margin: 0 41px 0 7px; }
.mode:nth-child(3) .cond, .mode:nth-child(4) .cond { flex: none; }
.mode:nth-child(4) { width: 84px; }
.groups { display: flex; height: 76px; }
.group { display: flex; flex-direction: column; justify-content: space-between; border-right: 2px solid #dcdcdc; }
.group:last-child { border: 0; }
.icons { display: flex; gap: 14.500px; padding: 0 0 0 4.500px; }
.icons svg { width: 50px; height: 50px; }
.label { display: flex; align-items: center; justify-content: center; gap: 1px; height: 21px; margin-bottom: -3px; }
.g-create { width: 392px; } .g-create .label { padding-right: 15px; }
.g-modify { width: 468px; } .g-modify .icons { padding-left: 15.500px; } .g-modify .label { padding-right: 7px; }
.g-assemble { width: 146px; } .g-assemble .icons { padding-left: 15px; } .g-assemble .label { padding-right: 5px; }
.g-construct { width: 148px; } .g-inspect { width: 119px; } .g-insert { width: 103px; } .g-select { width: 109px; }
.g-construct .label, .g-inspect .label { padding-right: 4px; }
.g-construct .icons, .g-inspect .icons, .g-insert .icons, .g-select .icons { padding: 0; justify-content: center; }
.fx { width: 50px; height: 50px; font: italic 52px/42px "Liberation Serif", serif; color: #666; text-align: center; }

.viewport { position: relative; height: 799px; margin-top: 1px; background: #fff; }
.scene { position: absolute; inset: 0; width: 1920px; height: 799px; }
.angle { font: 56px "Liberation Sans", sans-serif; fill: #4a86c8; }
.axis { font: bold 46px "Liberation Sans", sans-serif; }
.axis-z { fill: #9a9af2; } .axis-x { fill: #f09a9a; }
.face { font: bold 33px "Liberation Sans", sans-serif; fill: #8d9196; }

.browser { position: absolute; left: 6px; top: 5px; width: 450px; }
.panel { height: 38px; display: flex; align-items: center; background: #f1f1f1; border: 1.500px solid #c6c6c6; color: #6a6a6a; padding: 0 2px 0 7px; }
.browser .panel { height: 37px; }
.panel .cond { flex: 1; transform-origin: 0 50%; transform: scaleX(.91); }
.rew { width: 16px; height: 11px; margin-right: 14px; fill: #333; }
.knob { width: 14px; height: 14px; margin-right: 11px; fill: #333; }
.grip { width: 5px; height: 17px; border: 1px solid #999; border-width: 0 1px; }
.row { height: 36px; display: flex; align-items: center; padding-left: 54px; }
.root { margin-top: 5px; padding-left: 25px; }
.open { width: 18px; height: 18px; margin-right: 11px; }
.cell { height: 30px; display: flex; align-items: center; background: #f1f1f1; padding: 0 17px 0 4.500px; }
.root .cell { padding: 0 12px 0 3px; }
.arrow { width: 15px; height: 21px; margin-right: 12px; }
.gear { width: 24px; height: 24px; color: #999; }
.eye { width: 24px; height: 18px; }
.folder, .contact { width: 24px; height: 20px; }
.contact { height: 24px; }
.f2 { margin-left: 13px; }
.t1 { margin-left: 20.500px; white-space: nowrap; color: #444; }
.stripe { width: 8px; height: 30px; margin: 0 4px 0 -4.500px; }
.s-root { width: 5px; height: 24px; margin: 0 4px 0 0; background: #e291e4; }
.bodyi { width: 25px; height: 24px; margin-left: 13px; }
.part .t1 { margin-left: 20.500px; }
.picked { height: 24px; margin: 0 6px 0 8.500px; padding: 0 16px 0 4px; display: flex; align-items: center; gap: 20px; background: #999; color: #fff; font-weight: 700; font-size: 17px; letter-spacing: .15px; white-space: nowrap; }
.asm { width: 25px; height: 24px; }
.target { width: 20px; height: 20px; }

.tooltip { position: absolute; left: 760px; top: 407px; width: 162px; height: 22px; border: 1px solid #666; background: #f1f1f1; font: 16px/21px "Open Sans", sans-serif; letter-spacing: -.25px; padding-left: 3px; color: #1f1f2b; white-space: nowrap; }
.mini { position: absolute; left: 987px; top: 299px; width: 188.500px; height: 33px; background: #f1f1f1; display: flex; align-items: center; padding-left: 7px; }
.dots { width: 5px; height: 27px; margin-right: 20px; }
.rot { width: 20px; height: 20px; margin-right: 11px; }
.field { width: 104px; height: 25px; border: 1px solid #c8c8c8; background: #fff; padding: 0 0 0 18px; margin: -2px 8px 0 0; }
.field span { display: inline-block; height: 21px; line-height: 21px; width: 64px; background: #0078d7; color: #fff; white-space: nowrap; font-size: 16.500px; }
.comments { position: absolute; left: 6px; top: 755px; width: 450px; padding-left: 37px; border-top: 0; }
.navbar { position: absolute; left: 770px; top: 756px; width: 380px; height: 36px; background: #f1f1f1; }
.navbar svg { width: 380px; height: 36px; }
.rev { position: absolute; left: 1828px; top: 764px; font-weight: 700; font-size: 16.300px; line-height: 20px; color: #444; }

.timeline { height: 74px; border-top: 3px solid #cbcbcb; background: #f1f1f1; display: flex; align-items: flex-start; padding-top: 10px; }
.play { width: 190px; height: 24px; margin: 14px 23px 0 0; }
.track { display: grid; grid-template-columns: repeat(39, 36px); grid-template-rows: 9px 33px 10px; }
.bar { height: 9px; margin: 0 3px; grid-row: 1; }
.purple { background: #e291e4; } .cyan { background: #62dfe0; } .green { background: #c5f56d; } .pink { background: #ffaeb0; } .yellow { background: #ffd67a; }
.feat { grid-row: 2; display: grid; place-items: center; height: 35px; margin: -2px 0 0; border-radius: 3px; }
.feat svg { width: 25px; height: 25px; }
.feat-on { background: #0696d7; }
.tick { grid-row: 3; height: 9px; border-bottom: 3px solid #c9c9c9; display: flex; justify-content: center; }
.tick::before { content: ""; width: 2.500px; height: 8px; background: #c9c9c9; }
.tick-first { margin-left: 17px; justify-content: flex-start; }
.tick-last { margin-right: 17px; justify-content: flex-end; }
.marker { width: 20px; height: 50px; margin: 2px 0 0 -10px; }
.cog { margin: 14px 0 0 249px; color: #8e8e8e; }
```
FILE: app.js
```js
const NS = 'http://www.w3.org/2000/svg';

// Ground grid: orthographic projection, origin plus one vector per major square.
const O = [592.3, 959], G = [90.45, -37], R = [-121.8, -27.45];
const U = [-6, 12.8], V = [-10, 10.4];
const at = (u, v) => (O[0] + u * G[0] + v * R[0]).toFixed(1) + ' ' + (O[1] + u * G[1] + v * R[1]).toFixed(1);
const seg = (u1, v1, u2, v2) => 'M' + at(u1, v1) + 'L' + at(u2, v2);
let minor = '', major = '';
for (let i = U[0] * 5; i <= 64; i++) {
  const s = seg(i / 5, V[0], i / 5, V[1]);
  if (i % 5 === 0) major += s; else minor += s;
}
for (let i = V[0] * 5; i <= 52; i++) {
  const s = seg(U[0], i / 5, U[1], i / 5);
  if (i % 5 === 0) major += s; else minor += s;
}
const grid = document.getElementById('grid');
function draw(d, color, width) {
  const p = document.createElementNS(NS, 'path');
  p.setAttribute('d', d);
  p.setAttribute('stroke', color);
  p.setAttribute('stroke-width', width);
  grid.appendChild(p);
}
draw(minor, '#eeeeee', 1.3);
draw(major, '#d0d0d0', 1.5);
draw(seg(U[1], V[0], U[1], V[1]) + seg(U[0], V[1], U[1], V[1]), '#777', 1.4);
draw(seg(0, V[0], 0, V[1]), '#ff8f8f', 1.6);
draw(seg(U[0], 0, U[1], 0), '#8dfa8d', 1.8);
draw('M580 959a13 4 0 1 0 26 0a13 4 0 1 0 -26 0', '#a5a5a5', 2.5);

// Timeline: component colour bars, then features.
const bars = [['purple', 1], ['cyan', 10], ['purple', 1], ['green', 2], ['purple', 1], ['green', 5], ['purple', 1], ['green', 2], ['purple', 1], ['green', 1], ['purple', 1], ['pink', 5], ['green', 2], ['purple', 2], ['yellow', 3], ['purple', 1]];
const feats = 'box sketch extrude sketch revolve plane fillet sketch extrude mirror combine box sketch extrude jorigin extrude sketch revolve plane mirror joint-small sketch extrude sketch extrude box cylinder sketch extrude midplane mirror sketch extrude joint-small box tangent sketch revolve joint-small'.split(' ');
const activeFeature = 33;
let html = '', col = 1;
for (const [color, n] of bars) {
  html += `<i class="bar ${color}" style="grid-column:${col}/span ${n}"></i>`;
  col += n;
}
feats.forEach((f, i) => {
  html += `<span class="feat${i === activeFeature ? ' feat-on' : ''}"><svg><use href="#${f}"/></svg></span>`;
});
feats.forEach((f, i) => {
  html += `<i class="tick${i === 0 ? ' tick-first' : i === feats.length - 1 ? ' tick-last' : ''}"></i>`;
});
document.getElementById('track').innerHTML = html;
```
